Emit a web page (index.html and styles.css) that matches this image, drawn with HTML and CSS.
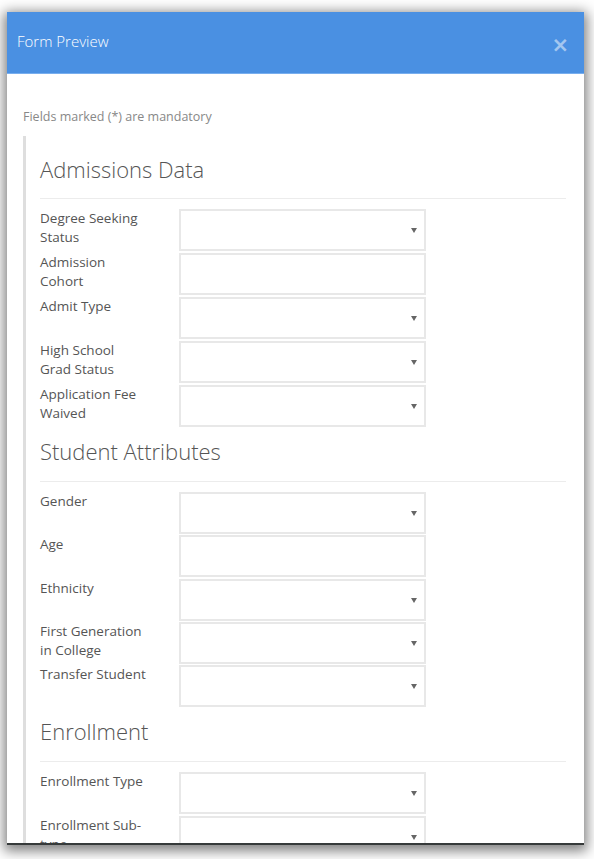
FILE: index.html
```html
<!DOCTYPE html>
<html>
<head>
<meta charset="utf-8">
<title>Form Preview</title>
<link rel="stylesheet" href="styles.css">
</head>
<body>
<div class="modal">
  <div class="modal-header">
    <h1 class="modal-title">Form Preview</h1>
    <span class="close">&times;</span>
  </div>
  <div class="modal-body">
    <p class="note">Fields marked (*) are mandatory</p>
    <div class="form">
      <section class="group">
        <h2 class="group-title">Admissions Data</h2>
        <div class="rows">
          <div class="row"><label class="label">Degree Seeking Status</label><div class="field select"></div></div>
          <div class="row"><label class="label">Admission Cohort</label><div class="field"></div></div>
          <div class="row"><label class="label">Admit Type</label><div class="field select"></div></div>
          <div class="row"><label class="label">High School Grad Status</label><div class="field select"></div></div>
          <div class="row"><label class="label">Application Fee Waived</label><div class="field select"></div></div>
        </div>
      </section>
      <section class="group">
        <h2 class="group-title">Student Attributes</h2>
        <div class="rows rows-tight">
          <div class="row"><label class="label">Gender</label><div class="field select"></div></div>
          <div class="row"><label class="label">Age</label><div class="field"></div></div>
          <div class="row"><label class="label">Ethnicity</label><div class="field select"></div></div>
          <div class="row"><label class="label">First Generation in College</label><div class="field select"></div></div>
          <div class="row"><label class="label">Transfer Student</label><div class="field select"></div></div>
        </div>
      </section>
      <section class="group">
        <h2 class="group-title">Enrollment</h2>
        <div class="rows">
          <div class="row"><label class="label">Enrollment Type</label><div class="field select"></div></div>
          <div class="row"><label class="label">Enrollment Sub-type</label><div class="field select"></div></div>
          <div class="row"><label class="label">Enrollment Status</label><div class="field select"></div></div>
        </div>
      </section>
    </div>
  </div>
</div>
</body>
</html>
```
FILE: styles.css
```css
html, body {
  margin: 0;
  padding: 0;
  background: #ffffff;
  height: 100%;
  overflow: hidden;
}
body {
  font-family: "Open Sans", "DejaVu Sans", sans-serif;
  color: #555;
}
.modal {
  margin: 12px 0 0 7px;
  width: 577px;
  height: 833px;
  background: #fff;
  display: flex;
  flex-direction: column;
  overflow: hidden;
  border-bottom: 2px solid #363a3a;
  box-sizing: border-box;
  box-shadow: 0 3px 12px 3px rgba(0, 0, 0, 0.5);
}
.modal-header {
  flex: 0 0 auto;
  height: 62px;
  box-sizing: border-box;
  background: #4a90e2;
  border-bottom: 1px solid #78aeee;
  display: flex;
  align-items: center;
  justify-content: space-between;
  padding: 0 15px 0 10px;
}
.modal-title {
  margin: 0;
  font-size: 15px;
  font-weight: 300;
  color: #fff;
  line-height: 22px;
  padding-bottom: 4px;
}
.close {
  font-family: "DejaVu Sans", sans-serif;
  font-size: 21px;
  font-weight: bold;
  line-height: 20px;
  color: rgba(255, 255, 255, 0.5);
  margin-top: 4px;
}
.modal-body {
  flex: 1 1 auto;
  overflow: hidden;
  padding: 34px 18px 0 16px;
}
.note {
  margin: 0;
  font-size: 12.5px;
  line-height: 17px;
  color: #888;
}
.form {
  margin-top: 11px;
  border-left: 3px solid #dedede;
  padding: 8px 0 0 14px;
}
.group-title {
  margin: 0 0 10px;
  padding: 10px 0 14px;
  font-size: 22px;
  line-height: 30px;
  font-weight: 300;
  color: #555;
  border-bottom: 1px solid #ececec;
}
.group + .group .group-title {
  padding-top: 9px;
  padding-bottom: 15px;
}
.rows {
  display: flex;
  flex-direction: column;
  gap: 2px;
}
.rows-tight {
  gap: 1.25px;
}
.row {
  display: grid;
  grid-template-columns: 139px 247px;
  align-items: start;
}
.label {
  font-size: 13.5px;
  line-height: 19px;
  color: #555;
  width: 107.5px;
}
.field {
  position: relative;
  height: 42px;
  box-sizing: border-box;
  border: 2px solid #e8e8e8;
  background: #fff;
}
.select::after {
  content: "";
  position: absolute;
  right: 7px;
  top: 17px;
  border-left: 3px solid transparent;
  border-right: 3px solid transparent;
  border-top: 5px solid #666;
}
```
